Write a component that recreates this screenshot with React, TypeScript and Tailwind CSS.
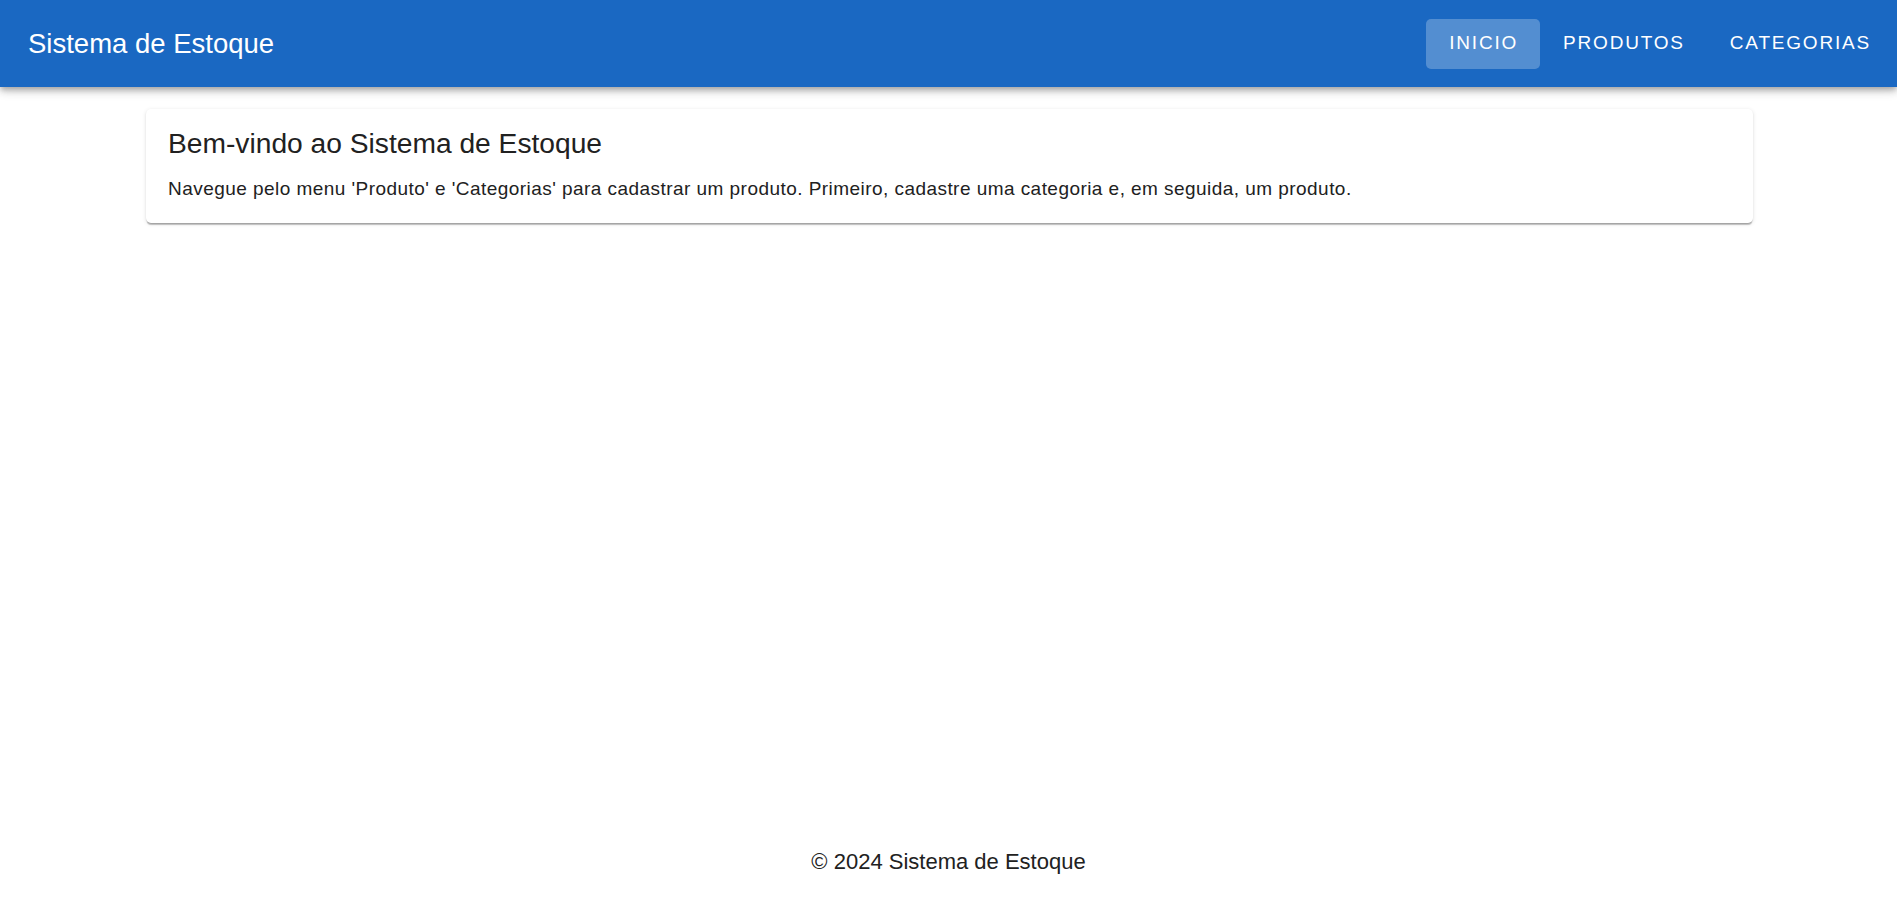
export default function App() {
  const links = ['INICIO', 'PRODUTOS', 'CATEGORIAS'];

  return (
    <div className="min-h-screen flex flex-col bg-white font-['Liberation_Sans',Arial,sans-serif] text-[#212121]">
      <header className="h-[87px] bg-[#1a68c2] flex items-center justify-between pl-[28px] pr-[4px] shadow-[0px_3px_5px_-1px_rgba(0,0,0,0.2),0px_5px_7px_0px_rgba(0,0,0,0.14),0px_1px_14px_0px_rgba(0,0,0,0.12)] relative z-10">
        <div className="text-white text-[27.5px] leading-[43px]">Sistema de Estoque</div>
        <nav className="flex items-center">
          {links.map((label, i) => (
            <button
              key={label}
              className={
                'h-[50px] pl-[23px] pr-[22px] rounded-[5px] text-white text-[19px] font-normal tracking-[1.8px] ' +
                (i === 0 ? 'bg-white/25' : 'bg-transparent')
              }
            >
              {label}
            </button>
          ))}
        </nav>
      </header>

      <main className="flex-1 pt-[22px]">
        <div className="mx-auto w-[1607px] translate-x-[1px] bg-white rounded-[5px] pt-[16px] pb-[21px] px-[22px] shadow-[0px_3px_1px_-1px_rgba(0,0,0,0.2),0px_1px_1px_0px_rgba(0,0,0,0.14),0px_1px_4px_0px_rgba(0,0,0,0.12)]">
          <h2 className="text-[28.2px] leading-[36px]">Bem-vindo ao Sistema de Estoque</h2>
          <p className="mt-[14px] text-[19px] leading-[27px] tracking-[0.45px]">
            Navegue pelo menu 'Produto' e 'Categorias' para cadastrar um produto. Primeiro, cadastre uma categoria e, em seguida, um produto.
          </p>
        </div>
      </main>

      <footer className="text-center text-[22px] leading-[33px] pb-[27px]">© 2024 Sistema de Estoque</footer>
    </div>
  );
}
